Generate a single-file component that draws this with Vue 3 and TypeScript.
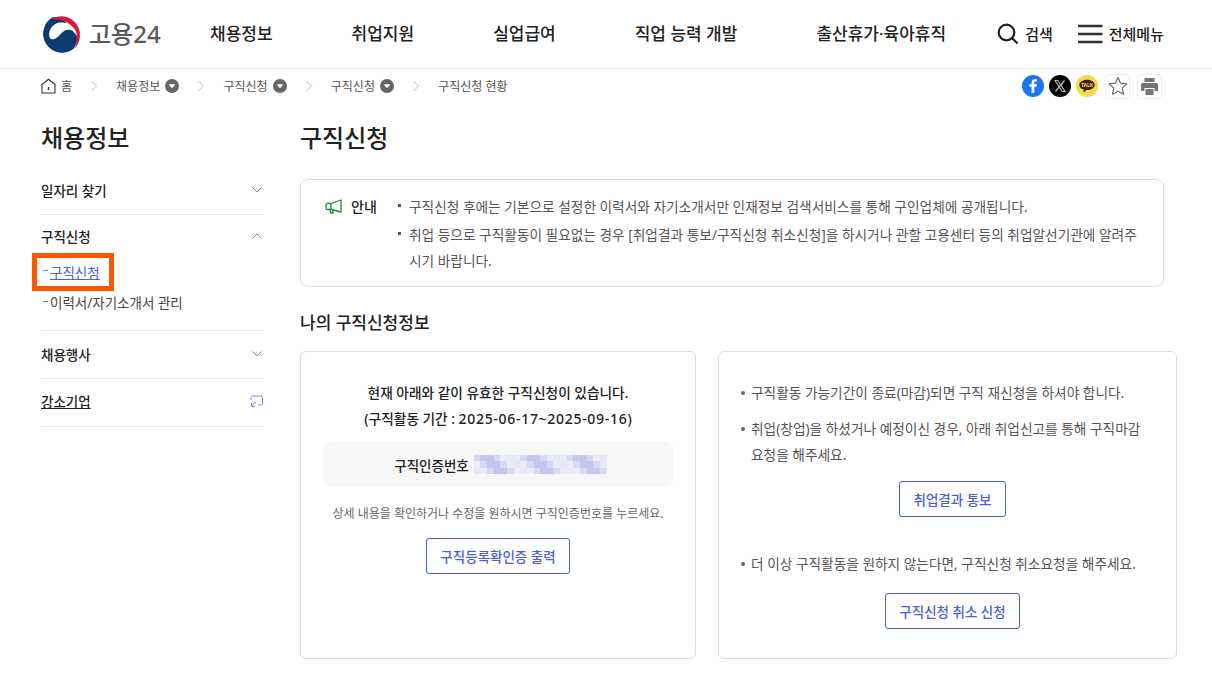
<script setup lang="ts">
const nav: string[] = ['채용정보', '취업지원', '실업급여', '직업 능력 개발', '출산휴가·육아휴직']
const crumbs: string[] = ['채용정보', '구직신청', '구직신청']
const shades: string[] = ['#d6d9f3', '#c1c7ee', '#e5e6f7', '#b9c1ec', '#dde0f5', '#eceaf6', '#cfd3f1']
const cells: string[] = Array.from({ length: 60 }, (_, i) => shades[(i * i * 3 + i * 5) % 7])
</script>

<template>
  <div class="page">
    <header class="top">
      <div class="logo">
        <svg width="38" height="38" viewBox="0 0 38 38">
          <path d="M10 2A19 19 0 1 0 31 33.500C34 28 35 24 34 21L20 4Z" fill="#0b3b6f"/>
          <path d="M8 4A19 19 0 0 1 31.500 33.500C36.500 24 33 13 24 7.500 19 4.500 13 3.800 8 4Z" fill="#d8173f"/>
          <path d="M6.500 22C4.500 14 11 6.500 20 7.500 28 8.200 33.500 14 34.300 21.500 32 15 26 13 21 16 18 18 16 22 12 23.800 9.800 24.800 7.500 24.500 6.500 22Z" fill="#fff"/>
        </svg>
        <span class="logo-text">고용24</span>
      </div>
      <nav class="nav">
        <a v-for="n in nav" :key="n">{{ n }}</a>
      </nav>
      <div class="tools">
        <span class="tool">
          <svg width="22" height="22" viewBox="0 0 22 22" fill="none" stroke="#1d1d1d" stroke-width="2.200"><circle cx="9.500" cy="9.500" r="7.800"/><path d="M15 15l5.500 5.500"/></svg>
          <span class="tool-text">검색</span>
        </span>
        <span class="tool menu">
          <svg width="25" height="20" viewBox="0 0 25 20" stroke="#333" stroke-width="2.400"><path d="M0 2h24.500M0 10h24.500M0 18h24.500"/></svg>
          <span class="tool-text">전체메뉴</span>
        </span>
      </div>
    </header>

    <div class="crumb-bar">
      <div class="crumbs">
        <span class="crumb home">
          <svg width="15" height="16" viewBox="0 0 15 16" fill="none" stroke="#333" stroke-width="1.100"><path d="M1 6.500 7.500 1.200 14 6.500V15H1Z" stroke-linejoin="round"/><path d="M7.500 9v3" stroke-width="1.400"/></svg>
          <span>홈</span>
        </span>
        <template v-for="c in crumbs" :key="c">
          <svg class="sep" width="8" height="12" viewBox="0 0 8 12" fill="none" stroke="#d8d8d8" stroke-width="1.200"><path d="M1.500 1l5 5-5 5"/></svg>
          <span class="crumb">
            <span>{{ c }}</span>
            <svg width="14" height="14" viewBox="0 0 14 14"><circle cx="7" cy="7" r="7" fill="#666"/><path d="M4.500 5.800h5L7 8.800Z" fill="#fff" stroke="#fff" stroke-linejoin="round"/></svg>
          </span>
        </template>
        <svg class="sep" width="8" height="12" viewBox="0 0 8 12" fill="none" stroke="#d8d8d8" stroke-width="1.200"><path d="M1.500 1l5 5-5 5"/></svg>
        <span class="crumb">구직신청 현황</span>
      </div>
      <div class="share">
        <svg width="22" height="22" viewBox="0 0 22 22"><circle cx="11" cy="11" r="11" fill="#1877f2"/><path d="M12.300 18v-6.200h2.200l.4-2.500h-2.600V7.800c0-.8.300-1.300 1.300-1.300h1.400V4.300c-.5-.1-1.200-.2-1.900-.2-2.200 0-3.500 1.300-3.500 3.500v1.700H7.400v2.500h2.200V18Z" fill="#fff"/></svg>
        <svg width="22" height="22" viewBox="0 0 22 22"><circle cx="11" cy="11" r="11" fill="#000"/><path d="M6 5.500h2.800L16 16.500h-2.800Z" fill="none" stroke="#bbb" stroke-width="1.100"/><path d="M15.500 5.500 6.500 16.500" fill="none" stroke="#bbb" stroke-width="1.300"/></svg>
        <svg width="22" height="22" viewBox="0 0 22 22"><circle cx="11" cy="11" r="11" fill="#f5dc48"/><path d="M11 4.800c-4.300 0-7.700 2.300-7.700 5.100 0 2.200 1.900 4 4.500 4.700l-.5 2.800 3.200-2.400h.5c4.300 0 7.700-2.300 7.700-5.100S15.300 4.800 11 4.800Z" fill="#3a1d1d"/><text x="11" y="11.800" text-anchor="middle" class="talk">TALK</text></svg>
        <span class="square">
          <svg width="20" height="20" viewBox="0 0 20 20" fill="none" stroke="#6a6a6a" stroke-width="1.200"><path d="M10 1.500l2.600 5.700 6.200.7-4.600 4.200 1.300 6.100L10 15.200l-5.500 3 1.300-6.100L1.200 7.900l6.200-.7Z" stroke-linejoin="round"/></svg>
        </span>
        <span class="square">
          <svg width="19" height="19" viewBox="0 0 19 19" fill="#757575"><path d="M4.500 1h10v4h-10Z"/><path d="M2.500 6h14A1.500 1.500 0 0 1 18 7.500V14h-3.500v-3h-10v3H1V7.500A1.500 1.500 0 0 1 2.500 6Z"/><path d="M5.500 12h8v6h-8Z"/></svg>
        </span>
      </div>
    </div>

    <div class="body">
      <aside class="side">
        <h2 class="side-title">채용정보</h2>
        <div class="side-item">
          <div class="side-row r1"><b>일자리 찾기</b><svg width="10" height="6" viewBox="0 0 10 6" fill="none" stroke="#8a8a8a" stroke-width="1"><path d="M.5.5 5 5 9.500.5"/></svg></div>
        </div>
        <div class="side-item open">
          <div class="side-row r2"><b>구직신청</b><svg width="10" height="6" viewBox="0 0 10 6" fill="none" stroke="#8a8a8a" stroke-width="1"><path d="M.5 5.500 5 1l4.500 4.500"/></svg></div>
          <a class="sub active"><span class="dash"></span><u>구직신청</u></a>
          <a class="sub"><span class="dash"></span>이력서/자기소개서 관리</a>
        </div>
        <div class="side-item">
          <div class="side-row r3"><b>채용행사</b><svg width="10" height="6" viewBox="0 0 10 6" fill="none" stroke="#8a8a8a" stroke-width="1"><path d="M.5.5 5 5 9.500.5"/></svg></div>
        </div>
        <div class="side-item">
          <div class="side-row r4"><b class="ul">강소기업</b><svg width="13" height="13" viewBox="0 0 13 13" fill="none" stroke="#6f86ea" stroke-width="1"><path d="M4 1h6.500a2 2 0 0 1 2 2v5a2 2 0 0 1-2 2H8M1 5V3.500A2.500 2.500 0 0 1 4 1M5.500 7 1.500 11.500M1.500 8v3.500H5"/></svg></div>
        </div>
      </aside>

      <main class="main">
        <h1 class="title">구직신청</h1>
        <section class="notice">
          <div class="notice-head">
            <svg width="17" height="16" viewBox="0 0 17 16" fill="none" stroke="#1f8a3c" stroke-width="1.300"><path d="M16 1v12L6 10.500H2.500A1.500 1.500 0 0 1 1 9V6a1.500 1.500 0 0 1 1.500-1.500H6Z" stroke-linejoin="round"/><path d="M6 4.500v6M5 10.500l.7 3.500h2.500l-.6-3"/></svg>
            <b>안내</b>
          </div>
          <ul class="notice-list">
            <li>구직신청 후에는 기본으로 설정한 이력서와 자기소개서만 인재정보 검색서비스를 통해 구인업체에 공개됩니다.</li>
            <li>취업 등으로 구직활동이 필요없는 경우 [취업결과 통보/구직신청 취소신청]을 하시거나 관할 고용센터 등의 취업알선기관에 알려주시기 바랍니다.</li>
          </ul>
        </section>

        <h3 class="sub-title">나의 구직신청정보</h3>

        <div class="cards">
          <section class="card left">
            <p class="strong">현재 아래와 같이 유효한 구직신청이 있습니다.</p>
            <p class="strong">(구직활동 기간 : <span class="dates">2025-06-17~2025-09-16</span>)</p>
            <div class="number">
              <b>구직인증번호</b>
              <span class="blur"><i v-for="(c, i) in cells" :key="i" class="cell" :style="{ background: c }"></i></span>
            </div>
            <p class="hint">상세 내용을 확인하거나 수정을 원하시면 구직인증번호를 누르세요.</p>
            <a class="btn">구직등록확인증 출력</a>
          </section>
          <section class="card right">
            <ul class="rlist">
              <li>구직활동 가능기간이 종료(마감)되면 구직 재신청을 하셔야 합니다.</li>
              <li>취업(창업)을 하셨거나 예정이신 경우, 아래 취업신고를 통해 구직마감 요청을 해주세요.</li>
            </ul>
            <a class="btn b1">취업결과 통보</a>
            <ul class="rlist second">
              <li>더 이상 구직활동을 원하지 않는다면, 구직신청 취소요청을 해주세요.</li>
            </ul>
            <a class="btn b2">구직신청 취소 신청</a>
          </section>
        </div>
      </main>
    </div>
  </div>
</template>

<style>
html, body { margin: 0; background: #fff; overflow: hidden; }
</style>

<style scoped>
.page {
  width: 1212px;
  height: 677px;
  overflow: hidden;
  font-family: "Noto Sans", "Noto Sans CJK KR", sans-serif;
  color: #222;
  font-size: 13px;
}
.top {
  height: 69px;
  box-sizing: border-box;
  border-bottom: 1px solid #e6e6e6;
  display: flex;
  align-items: center;
  padding: 0 0 1px 43px;
}
.logo { display: flex; align-items: center; gap: 8px; width: 167px; }
.logo-text { font-size: 24px; font-weight: 500; color: #5a5a5a; padding-bottom: 3px; }
.nav { display: flex; gap: 79px; font-size: 17px; font-weight: 500; color: #222; padding-bottom: 2px; }
.nav a { white-space: nowrap; }
.tools { display: flex; align-items: center; margin-left: 51px; font-size: 15px; font-weight: 500; }
.tool { display: flex; align-items: center; gap: 6px; }
.tool-text { padding-bottom: 1px; }
.menu { margin-left: 25px; gap: 6px; }
.crumb-bar {
  height: 34px;
  display: flex;
  align-items: center;
  justify-content: space-between;
  padding: 0 50px 0 41px;
}
.crumbs { display: flex; align-items: center; gap: 18px; font-size: 12px; color: #555; }
.crumb { display: flex; align-items: center; gap: 5.200px; }
.home { gap: 5px; }
.share { display: flex; align-items: center; gap: 5px; }
.talk { font-size: 5px; font-weight: 700; fill: #f5dc48; }
.square {
  width: 25px;
  height: 25px;
  box-sizing: border-box;
  border: 1px solid #eee;
  border-radius: 4px;
  display: flex;
  align-items: center;
  justify-content: center;
  margin-left: 2px;
}
.body { display: flex; padding: 14px 0 0 41px; gap: 36px; }
.side { width: 223px; flex: none; }
.side-title { margin: 0; font-size: 24px; font-weight: 500; line-height: 36px; padding: 3px 0 10px; color: #222; }
.side-item { border-bottom: 1px solid #e8e8e8; }
.side-row {
  display: flex;
  justify-content: space-between;
  align-items: center;
  height: 47px;
  box-sizing: border-box;
  padding-right: 2px;
  font-size: 13.500px;
}
.side-row.r1 { height: 48px; padding-bottom: 1px; }
.side-row.r2 { height: 43px; padding-bottom: 2px; }
.side-row.r3 { padding-bottom: 2px; }
.side-row.r4 { padding: 0 1px 3px 0; }
.side-row b { font-weight: 500; color: #222; }
.side-row .ul { text-decoration: underline; }
.open { padding-bottom: 11px; }
.sub { display: flex; align-items: center; height: 33px; box-sizing: border-box; padding-bottom: 2px; font-size: 13.500px; color: #444; }
.sub.active {
  height: 28px;
  width: 72px;
  margin: 0 0 0 -4px;
  padding: 0 0 1px 4px;
  color: #4a5fd6;
  outline: 5px solid #ff5500;
}
.dash { width: 5px; height: 1px; background: #777; margin: 0 2px 0 2px; }
.active .dash { background: #7a8ce0; margin-bottom: 2px; }
.main { width: 864px; flex: none; }
.title { margin: 0; font-size: 24px; font-weight: 500; line-height: 36px; padding-top: 3px; color: #222; }
.notice {
  margin-top: 23px;
  border: 1px solid #ddd;
  border-radius: 8px;
  height: 108px;
  display: flex;
  padding: 14px 24px 0 24px;
  box-sizing: border-box;
}
.notice-head { display: flex; align-items: flex-start; gap: 9px; width: 72px; flex: none; font-size: 14px; line-height: 26px; }
.notice-head svg { margin-top: 5px; }
.notice-head b { font-weight: 500; }
.notice-list { margin: 0; padding: 0; list-style: none; font-size: 13.700px; line-height: 26px; color: #555; }
.notice-list li { position: relative; padding-left: 12px; margin-bottom: 2px; }
.notice-list li::before {
  content: "";
  position: absolute;
  left: 1px;
  top: 10px;
  width: 3px;
  height: 3px;
  background: #555;
}
.sub-title { margin: 24px 0 16px; font-size: 17px; font-weight: 500; line-height: 24px; color: #222; }
.cards { display: flex; gap: 22px; width: 877px; }
.card {
  border: 1px solid #ddd;
  border-radius: 6px;
  height: 308px;
  box-sizing: border-box;
  flex: none;
}
.left { width: 396px; display: flex; flex-direction: column; align-items: center; padding: 28px 22px 0; }
.right { width: 459px; padding: 28px 12px 0 22px; display: flex; flex-direction: column; align-items: center; }
.strong { margin: 0; font-size: 13.700px; font-weight: 500; line-height: 26px; color: #222; }
.dates { font-size: 14px; letter-spacing: .7px; }
.number {
  width: 100%;
  height: 45px;
  margin-top: 10px;
  background: #f7f7f7;
  border-radius: 8px;
  display: flex;
  align-items: center;
  justify-content: center;
  gap: 5px;
  padding-left: 5px;
  box-sizing: border-box;
  font-size: 13.500px;
}
.number b { font-weight: 500; }
.blur { display: grid; grid-template-columns: repeat(20, 6.650px); grid-auto-rows: 6.300px; width: 133px; }
.cell { display: block; }
.hint { margin: 18px 0 0; font-size: 12px; line-height: 18px; color: #666; }
.btn {
  display: flex;
  align-items: center;
  justify-content: center;
  height: 36px;
  border: 1px solid #4a5fd6;
  border-radius: 3px;
  color: #4a5fd6;
  font-size: 13.500px;
  font-weight: 500;
  box-sizing: border-box;
  white-space: nowrap;
}
.left .btn { width: 144px; margin-top: 15px; }
.rlist { list-style: none; margin: 0; padding: 0; width: 100%; font-size: 13.700px; line-height: 26px; color: #555; }
.rlist li { position: relative; padding: 0 12px 0 10px; margin-bottom: 10px; word-break: keep-all; }
.rlist li::before {
  content: "";
  position: absolute;
  left: 0;
  top: 11px;
  width: 4px;
  height: 4px;
  border-radius: 50%;
  background: #666;
}
.b1 { width: 107px; margin-top: 3px; }
.second { margin-top: 34px; }
.b2 { width: 135px; margin-top: 6px; }
</style>
